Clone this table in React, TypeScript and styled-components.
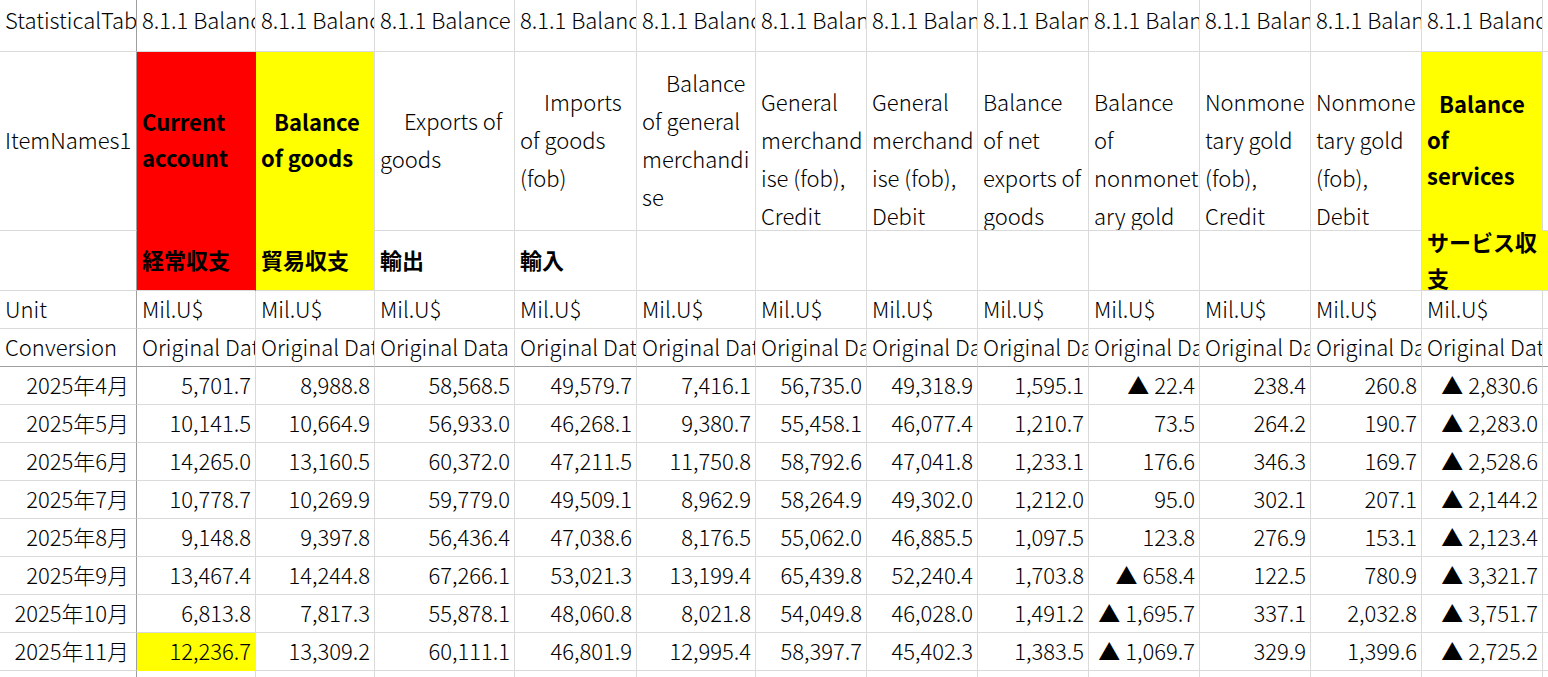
import React from "react";
import styled, { createGlobalStyle } from "styled-components";

const GlobalStyle = createGlobalStyle`
  html, body {
    margin: 0;
    padding: 0;
    background: #ffffff;
    overflow: hidden;
  }
  body {
    font-family: "Noto Sans CJK JP", "Noto Sans", sans-serif;
    color: #000000;
  }
`;

const COLS = [137, 119, 119, 140, 122, 119, 111, 111, 111, 111, 111, 111, 121, 60];
const GRID = "#dadada";
const FROZEN = "#9e9e9e";
const RED = "#ff0000";
const YELLOW = "#ffff00";

const Sheet = styled.div`
  display: grid;
  grid-template-columns: ${COLS.map((c) => `${c}px`).join(" ")};
  grid-template-rows: 52px 179px 60px 38px 38px repeat(9, 38px);
  width: 1548px;
  height: 677px;
  overflow: hidden;
  font-size: 22px;
`;

type CellProps = {
  $fill?: string;
  $right?: boolean;
  $top?: boolean;
  $bold?: boolean;
  $lh?: number;
  $indent?: number;
  $lead?: boolean;
  $frozenR?: boolean;
  $frozenB?: boolean;
  $fillBottom?: boolean;
  $fillRight?: boolean;
  $pr?: number;
};

const Cell = styled.div<CellProps>`
  box-sizing: border-box;
  display: flex;
  flex-direction: column;
  justify-content: ${(p) => (p.$top ? "flex-start" : "center")};
  align-items: ${(p) => (p.$right ? "flex-end" : "flex-start")};
  padding: ${(p) => (p.$lead ? 38 : 0)}px ${(p) => p.$pr ?? 4}px
    ${(p) => (p.$top ? 0 : 4)}px 5px;
  overflow: hidden;
  background: ${(p) => p.$fill ?? "#ffffff"};
  border-right: 1px solid
    ${(p) => (p.$frozenR ? FROZEN : p.$fill && p.$fillRight ? p.$fill : GRID)};
  border-bottom: 1px solid
    ${(p) => (p.$frozenB ? FROZEN : p.$fill && p.$fillBottom ? p.$fill : GRID)};
  font-weight: ${(p) => (p.$bold ? 700 : 300)};
  line-height: ${(p) => p.$lh ?? 38}px;
  white-space: nowrap;
  & > span:first-child {
    padding-left: ${(p) => p.$indent ?? 0}px;
  }
`;

const Line = styled.span`
  display: block;
  white-space: nowrap;
`;

type HeadDef = {
  lines: string[];
  bold?: boolean;
  fill?: string;
  indent?: number;
  lead?: boolean;
};

const head2: HeadDef[] = [
  { lines: ["Current", "account"], bold: true, fill: RED },
  { lines: ["Balance", "of goods"], bold: true, fill: YELLOW, indent: 13 },
  { lines: ["Exports of", "goods"], indent: 24 },
  { lines: ["Imports", "of goods", "(fob)"], indent: 24 },
  { lines: ["Balance", "of general", "merchandi", "se"], indent: 24 },
  { lines: ["General", "merchand", "ise (fob),", "Credit"], lead: true },
  { lines: ["General", "merchand", "ise (fob),", "Debit"], lead: true },
  { lines: ["Balance", "of net", "exports of", "goods"], lead: true },
  { lines: ["Balance", "of", "nonmonet", "ary gold"], lead: true },
  { lines: ["Nonmone", "tary gold", "(fob),", "Credit"], lead: true },
  { lines: ["Nonmone", "tary gold", "(fob),", "Debit"], lead: true },
  { lines: ["Balance", "of", "services"], bold: true, fill: YELLOW, indent: 12 },
];

const head3: HeadDef[] = [
  { lines: ["経常収支"], bold: true, fill: RED },
  { lines: ["貿易収支"], bold: true, fill: YELLOW },
  { lines: ["輸出"], bold: true },
  { lines: ["輸入"], bold: true },
  { lines: [] },
  { lines: [] },
  { lines: [] },
  { lines: [] },
  { lines: [] },
  { lines: [] },
  { lines: [] },
  { lines: ["サービス収", "支"], bold: true, fill: YELLOW },
];

const rows: { label: string; values: string[] }[] = [
  { label: "2025年4月", values: ["5,701.7", "8,988.8", "58,568.5", "49,579.7", "7,416.1", "56,735.0", "49,318.9", "1,595.1", "▲ 22.4", "238.4", "260.8", "▲ 2,830.6"] },
  { label: "2025年5月", values: ["10,141.5", "10,664.9", "56,933.0", "46,268.1", "9,380.7", "55,458.1", "46,077.4", "1,210.7", "73.5", "264.2", "190.7", "▲ 2,283.0"] },
  { label: "2025年6月", values: ["14,265.0", "13,160.5", "60,372.0", "47,211.5", "11,750.8", "58,792.6", "47,041.8", "1,233.1", "176.6", "346.3", "169.7", "▲ 2,528.6"] },
  { label: "2025年7月", values: ["10,778.7", "10,269.9", "59,779.0", "49,509.1", "8,962.9", "58,264.9", "49,302.0", "1,212.0", "95.0", "302.1", "207.1", "▲ 2,144.2"] },
  { label: "2025年8月", values: ["9,148.8", "9,397.8", "56,436.4", "47,038.6", "8,176.5", "55,062.0", "46,885.5", "1,097.5", "123.8", "276.9", "153.1", "▲ 2,123.4"] },
  { label: "2025年9月", values: ["13,467.4", "14,244.8", "67,266.1", "53,021.3", "13,199.4", "65,439.8", "52,240.4", "1,703.8", "▲ 658.4", "122.5", "780.9", "▲ 3,321.7"] },
  { label: "2025年10月", values: ["6,813.8", "7,817.3", "55,878.1", "48,060.8", "8,021.8", "54,049.8", "46,028.0", "1,491.2", "▲ 1,695.7", "337.1", "2,032.8", "▲ 3,751.7"] },
  { label: "2025年11月", values: ["12,236.7", "13,309.2", "60,111.1", "46,801.9", "12,995.4", "58,397.7", "45,402.3", "1,383.5", "▲ 1,069.7", "329.9", "1,399.6", "▲ 2,725.2"] },
];

const DATA_COLS = 12;

export default function App() {
  const cells: React.ReactNode[] = [];

  // Row 1
  cells.push(
    <Cell key="r1a" $top $frozenR>
      <Line>StatisticalTable</Line>
    </Cell>
  );
  for (let i = 0; i <= DATA_COLS; i++) {
    cells.push(
      <Cell key={`r1-${i}`} $top>
        <Line>8.1.1 Balance of payments</Line>
      </Cell>
    );
  }

  // Row 2
  cells.push(
    <Cell key="r2a" $frozenR>
      <Line>ItemNames1</Line>
    </Cell>
  );
  head2.forEach((h, i) => {
    const nextFilled = i + 1 < head2.length && !!head2[i + 1].fill;
    cells.push(
      <Cell
        key={`r2-${i}`}
        $fill={h.fill}
        $bold={h.bold}
        $lh={h.bold ? 36 : 38}
        $indent={h.indent}
        $lead={h.lead}
        $fillBottom
        $fillRight={nextFilled}
      >
        {h.lines.map((l, j) => (
          <Line key={j}>{l}</Line>
        ))}
      </Cell>
    );
  });
  cells.push(<Cell key="r2n" />);

  // Row 3
  cells.push(<Cell key="r3a" $frozenR />);
  head3.forEach((h, i) => {
    const nextFilled = i + 1 < head3.length && !!head3[i + 1].fill;
    cells.push(
      <Cell
        key={`r3-${i}`}
        $fill={h.fill}
        $bold={h.bold}
        $lh={36}
        $fillRight={nextFilled || i === head3.length - 1}
      >
        {h.lines.map((l, j) => (
          <Line key={j}>{l}</Line>
        ))}
      </Cell>
    );
  });
  cells.push(<Cell key="r3n" $fill={YELLOW} $fillRight />);

  // Row 4
  cells.push(
    <Cell key="r4a" $frozenR>
      <Line>Unit</Line>
    </Cell>
  );
  for (let i = 0; i < DATA_COLS; i++) {
    cells.push(
      <Cell key={`r4-${i}`}>
        <Line>Mil.U$</Line>
      </Cell>
    );
  }
  cells.push(<Cell key="r4n" />);

  // Row 5
  cells.push(
    <Cell key="r5a" $frozenR $frozenB>
      <Line>Conversion</Line>
    </Cell>
  );
  for (let i = 0; i <= DATA_COLS; i++) {
    cells.push(
      <Cell key={`r5-${i}`} $frozenB>
        <Line>Original Data</Line>
      </Cell>
    );
  }

  // Data rows
  rows.forEach((r, ri) => {
    cells.push(
      <Cell key={`d${ri}a`} $frozenR $right $pr={7}>
        <Line>{r.label}</Line>
      </Cell>
    );
    r.values.forEach((v, ci) => {
      const hl = ri === rows.length - 1 && ci === 0;
      cells.push(
        <Cell
          key={`d${ri}-${ci}`}
          $right
          $fill={hl ? YELLOW : undefined}
          $fillBottom={hl}
          $fillRight={hl}
        >
          <Line>{v}</Line>
        </Cell>
      );
    });
    cells.push(<Cell key={`d${ri}n`} />);
  });

  // Partial trailing row
  cells.push(<Cell key="ta" $frozenR />);
  for (let i = 0; i <= DATA_COLS; i++) {
    cells.push(<Cell key={`t-${i}`} />);
  }

  return (
    <>
      <GlobalStyle />
      <Sheet>{cells}</Sheet>
    </>
  );
}
